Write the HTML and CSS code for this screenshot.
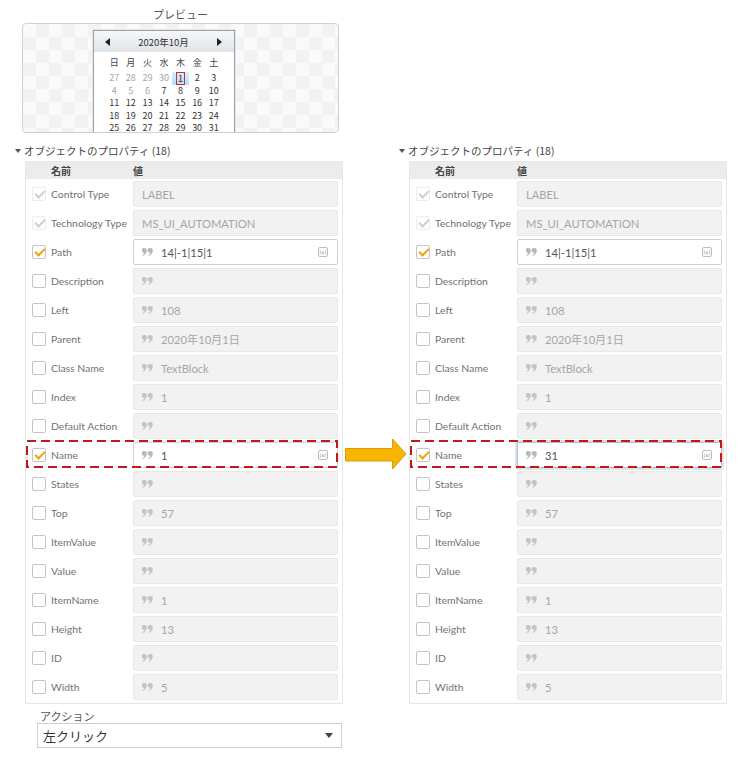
FILE: index.html
```html
<!DOCTYPE html>
<html lang="ja">
<head>
<meta charset="utf-8">
<title>プレビュー</title>
<link rel="stylesheet" href="styles.css">
</head>
<body>
<svg width="0" height="0" class="defs">
  <symbol id="q" viewBox="0 0 11 8">
    <path d="M2.4 0a2.4 2.4 0 0 1 2.4 2.5c0 2.4-1.7 4.3-3.9 5.5l-.5-.8c1.2-.8 1.9-1.6 2.1-2.5A2.4 2.4 0 1 1 2.4 0zM8.4 0a2.4 2.4 0 0 1 2.4 2.5c0 2.4-1.7 4.3-3.9 5.5l-.5-.8c1.2-.8 1.9-1.6 2.1-2.5A2.4 2.4 0 1 1 8.4 0z"/>
  </symbol>
</svg>
<div class="page">
  <section class="preview">
    <div class="preview-title">プレビュー</div>
    <div class="preview-box">
      <div class="cal">
        <div class="cal-head">
          <span class="tri-l"></span>
          <span class="cal-title">2020年10月</span>
          <span class="tri-r"></span>
        </div>
        <div class="cal-body">
          <div class="cal-grid wd">
            <span>日</span><span>月</span><span>火</span><span>水</span><span>木</span><span>金</span><span>土</span>
          </div>
          <div class="cal-grid">
            <span class="o">27</span><span class="o">28</span><span class="o">29</span><span class="o">30</span><span class="sel"><span class="selin">1</span></span><span>2</span><span>3</span>
            <span class="o">4</span><span class="o">5</span><span class="o">6</span><span>7</span><span>8</span><span>9</span><span>10</span>
            <span>11</span><span>12</span><span>13</span><span>14</span><span>15</span><span>16</span><span>17</span>
            <span>18</span><span>19</span><span>20</span><span>21</span><span>22</span><span>23</span><span>24</span>
            <span>25</span><span>26</span><span>27</span><span>28</span><span>29</span><span>30</span><span>31</span>
          </div>
        </div>
      </div>
    </div>
  </section>

  <div class="panels">
    <section class="panel">
      <div class="panel-head"><span class="caret"></span><span>オブジェクトのプロパティ (18)</span></div>
      <div class="props">
        <div class="props-head"><span></span><span>名前</span><span>値</span></div>
        <div class="rows">
          <div class="row"><span class="cb dis on"></span><span class="lbl">Control Type</span><span class="val"><span class="vt">LABEL</span></span></div>
          <div class="row"><span class="cb dis on"></span><span class="lbl">Technology Type</span><span class="val"><span class="vt">MS_UI_AUTOMATION</span></span></div>
          <div class="row"><span class="cb on"></span><span class="lbl">Path</span><span class="val act"><svg class="qi"><use href="#q"/></svg><span class="vt">14|-1|15|1</span><span class="xi">(x)</span></span></div>
          <div class="row"><span class="cb"></span><span class="lbl">Description</span><span class="val"><svg class="qi"><use href="#q"/></svg></span></div>
          <div class="row"><span class="cb"></span><span class="lbl">Left</span><span class="val"><svg class="qi"><use href="#q"/></svg><span class="vt">108</span></span></div>
          <div class="row"><span class="cb"></span><span class="lbl">Parent</span><span class="val"><svg class="qi"><use href="#q"/></svg><span class="vt">2020年10月1日</span></span></div>
          <div class="row"><span class="cb"></span><span class="lbl">Class Name</span><span class="val"><svg class="qi"><use href="#q"/></svg><span class="vt">TextBlock</span></span></div>
          <div class="row"><span class="cb"></span><span class="lbl">Index</span><span class="val"><svg class="qi"><use href="#q"/></svg><span class="vt">1</span></span></div>
          <div class="row"><span class="cb"></span><span class="lbl">Default Action</span><span class="val"><svg class="qi"><use href="#q"/></svg></span></div>
          <div class="row hl"><span class="cb on"></span><span class="lbl">Name</span><span class="val act"><svg class="qi"><use href="#q"/></svg><span class="vt">1</span><span class="xi">(x)</span></span>
            <svg class="dash"><rect x="0" y="0" width="100%" height="100%"/></svg>
            <svg class="arrow" width="62" height="32" viewBox="0 0 62 32"><polygon points="0.5,10.5 47.5,10.5 47.5,1 61,16 47.5,31 47.5,23 0.5,23"/></svg>
          </div>
          <div class="row"><span class="cb"></span><span class="lbl">States</span><span class="val"><svg class="qi"><use href="#q"/></svg></span></div>
          <div class="row"><span class="cb"></span><span class="lbl">Top</span><span class="val"><svg class="qi"><use href="#q"/></svg><span class="vt">57</span></span></div>
          <div class="row"><span class="cb"></span><span class="lbl">ItemValue</span><span class="val"><svg class="qi"><use href="#q"/></svg></span></div>
          <div class="row"><span class="cb"></span><span class="lbl">Value</span><span class="val"><svg class="qi"><use href="#q"/></svg></span></div>
          <div class="row"><span class="cb"></span><span class="lbl">ItemName</span><span class="val"><svg class="qi"><use href="#q"/></svg><span class="vt">1</span></span></div>
          <div class="row"><span class="cb"></span><span class="lbl">Height</span><span class="val"><svg class="qi"><use href="#q"/></svg><span class="vt">13</span></span></div>
          <div class="row"><span class="cb"></span><span class="lbl">ID</span><span class="val"><svg class="qi"><use href="#q"/></svg></span></div>
          <div class="row"><span class="cb"></span><span class="lbl">Width</span><span class="val"><svg class="qi"><use href="#q"/></svg><span class="vt">5</span></span></div>
        </div>
      </div>
      <div class="action">
        <div class="action-label">アクション</div>
        <div class="select"><span>左クリック</span><span class="sel-caret"></span></div>
      </div>
    </section>

    <section class="panel">
      <div class="panel-head"><span class="caret"></span><span>オブジェクトのプロパティ (18)</span></div>
      <div class="props">
        <div class="props-head"><span></span><span>名前</span><span>値</span></div>
        <div class="rows">
          <div class="row"><span class="cb dis on"></span><span class="lbl">Control Type</span><span class="val"><span class="vt">LABEL</span></span></div>
          <div class="row"><span class="cb dis on"></span><span class="lbl">Technology Type</span><span class="val"><span class="vt">MS_UI_AUTOMATION</span></span></div>
          <div class="row"><span class="cb on"></span><span class="lbl">Path</span><span class="val act"><svg class="qi"><use href="#q"/></svg><span class="vt">14|-1|15|1</span><span class="xi">(x)</span></span></div>
          <div class="row"><span class="cb"></span><span class="lbl">Description</span><span class="val"><svg class="qi"><use href="#q"/></svg></span></div>
          <div class="row"><span class="cb"></span><span class="lbl">Left</span><span class="val"><svg class="qi"><use href="#q"/></svg><span class="vt">108</span></span></div>
          <div class="row"><span class="cb"></span><span class="lbl">Parent</span><span class="val"><svg class="qi"><use href="#q"/></svg><span class="vt">2020年10月1日</span></span></div>
          <div class="row"><span class="cb"></span><span class="lbl">Class Name</span><span class="val"><svg class="qi"><use href="#q"/></svg><span class="vt">TextBlock</span></span></div>
          <div class="row"><span class="cb"></span><span class="lbl">Index</span><span class="val"><svg class="qi"><use href="#q"/></svg><span class="vt">1</span></span></div>
          <div class="row"><span class="cb"></span><span class="lbl">Default Action</span><span class="val"><svg class="qi"><use href="#q"/></svg></span></div>
          <div class="row hl"><span class="cb on"></span><span class="lbl">Name</span><span class="val act focus"><svg class="qi"><use href="#q"/></svg><span class="vt">31</span><span class="xi">(x)</span></span>
            <svg class="dash"><rect x="0" y="0" width="100%" height="100%"/></svg>
          </div>
          <div class="row"><span class="cb"></span><span class="lbl">States</span><span class="val"><svg class="qi"><use href="#q"/></svg></span></div>
          <div class="row"><span class="cb"></span><span class="lbl">Top</span><span class="val"><svg class="qi"><use href="#q"/></svg><span class="vt">57</span></span></div>
          <div class="row"><span class="cb"></span><span class="lbl">ItemValue</span><span class="val"><svg class="qi"><use href="#q"/></svg></span></div>
          <div class="row"><span class="cb"></span><span class="lbl">Value</span><span class="val"><svg class="qi"><use href="#q"/></svg></span></div>
          <div class="row"><span class="cb"></span><span class="lbl">ItemName</span><span class="val"><svg class="qi"><use href="#q"/></svg><span class="vt">1</span></span></div>
          <div class="row"><span class="cb"></span><span class="lbl">Height</span><span class="val"><svg class="qi"><use href="#q"/></svg><span class="vt">13</span></span></div>
          <div class="row"><span class="cb"></span><span class="lbl">ID</span><span class="val"><svg class="qi"><use href="#q"/></svg></span></div>
          <div class="row"><span class="cb"></span><span class="lbl">Width</span><span class="val"><svg class="qi"><use href="#q"/></svg><span class="vt">5</span></span></div>
        </div>
      </div>
    </section>
  </div>
</div>
</body>
</html>
```

FILE: styles.css
```css
* { box-sizing: border-box; }

body {
  margin: 0;
  background: #fff;
  color: #555;
  font-family: "Lato", "Noto Sans CJK JP", sans-serif;
}

.defs { position: absolute; width: 0; height: 0; overflow: hidden; }

/* ---------- preview ---------- */
.preview {
  margin-left: 22px;
  width: 317px;
}

.preview-title {
  height: 23px;
  padding-top: 7px;
  line-height: 14px;
  font-size: 11px;
  text-align: center;
  color: #555;
  font-family: "Noto Sans CJK JP", sans-serif;
}

.preview-box {
  height: 110px;
  border: 1px solid #d2d2d2;
  border-radius: 4px;
  overflow: hidden;
  padding: 6px 0 0 70px;
  background: repeating-conic-gradient(#f2f2f2 0 25%, #fafafa 0 50%) 0 0 / 26px 26px;
}

.cal {
  width: 142px;
  height: 130px;
  background: #fff;
  border: 1px solid #98a3ae;
  box-shadow: 0 0 0 1px #e4e7ea;
  font-family: "Noto Sans CJK JP", sans-serif;
}

.cal-head {
  height: 21px;
  display: flex;
  align-items: center;
  justify-content: space-between;
  padding: 0 12px 0 11px;
  background: linear-gradient(#f6f7f9, #dfe3e8);
  font-size: 9.5px;
  color: #333;
}

.tri-l, .tri-r {
  width: 0;
  height: 0;
  border-top: 4px solid transparent;
  border-bottom: 4px solid transparent;
}
.tri-l { border-right: 5px solid #222; }
.tri-r { border-left: 5px solid #222; }

.cal-body { padding: 5px 12px 0 12px; }

.cal-grid {
  display: grid;
  grid-template-columns: repeat(7, 1fr);
  font-size: 9px;
  line-height: 12.5px;
  text-align: center;
  color: #333;
}

.cal-grid.wd { margin-bottom: 2.5px; color: #444; }

.cal-grid .o { color: #a5a5a5; }

.cal-grid .sel {
  background: linear-gradient(#d9eefa, #b9dff3);
  display: flex;
  justify-content: center;
  align-items: center;
}

.selin {
  outline: 1px solid #c0313a;
  line-height: 11px;
  padding: 0 1px;
}

/* ---------- panels ---------- */
.panels {
  display: flex;
  gap: 55px;
  margin-top: 12px;
  margin-left: 14px;
}

.panel { width: 329px; }

.panel-head {
  height: 12px;
  line-height: 12px;
  display: flex;
  align-items: center;
  gap: 2px;
  margin-bottom: 4px;
  font-size: 10.5px;
  color: #444;
  font-family: "Noto Sans CJK JP", sans-serif;
}

.caret {
  width: 0;
  height: 0;
  margin: 0 1px;
  border-left: 3px solid transparent;
  border-right: 3px solid transparent;
  border-top: 4px solid #555;
}

.props {
  margin-left: 11px;
  width: 318px;
  border: 1px solid #e6e6e6;
  border-radius: 2px;
}

.props-head {
  height: 17px;
  background: #ececec;
  display: grid;
  grid-template-columns: 14px 77px 1fr;
  column-gap: 5px;
  align-items: center;
  padding-left: 6px;
  font-size: 10px;
  font-weight: 700;
  color: #444;
  font-family: "Noto Sans CJK JP", sans-serif;
}

.rows {
  display: flex;
  flex-direction: column;
  gap: 3px;
  padding: 2px 4px 3px 6px;
}

.row {
  position: relative;
  display: grid;
  grid-template-columns: 14px 77px 1fr;
  column-gap: 5px;
  align-items: center;
  height: 26px;
}

.cb {
  position: relative;
  width: 14px;
  height: 14px;
  border: 1px solid #c4c4c4;
  border-radius: 2px;
  background: #fff;
}

.cb.on::after {
  content: "";
  position: absolute;
  left: 4px;
  top: 0px;
  width: 4px;
  height: 8px;
  border: solid #f0a500;
  border-width: 0 2px 2px 0;
  transform: rotate(45deg);
}

.cb.dis { border-color: #ececec; }
.cb.dis.on::after { border-color: #cfcfcf; }

.lbl {
  font-size: 10.4px;
  color: #727272;
  white-space: nowrap;
}

.val {
  height: 26px;
  display: flex;
  align-items: center;
  gap: 8px;
  padding: 0 9px 0 8px;
  border: 1px solid #e8e8e8;
  border-radius: 2px;
  background: #f2f2f2;
  font-size: 11.2px;
  color: #a6a6a6;
  white-space: nowrap;
}

.val.act {
  background: #fff;
  border-color: #d0d0d0;
  color: #555;
}

.val.focus {
  border-color: #aebccb;
  box-shadow: 0 0 0 2px #dce3ea;
}

.qi {
  width: 11px;
  height: 8px;
  flex: none;
  fill: #c4c4c4;
}

.val.act .qi { fill: #b8b8b8; }

.xi {
  margin-left: auto;
  width: 10px;
  height: 10px;
  border: 1px solid #bbb;
  border-radius: 2px;
  font-size: 5px;
  line-height: 8px;
  text-align: center;
  color: #888;
  font-family: "DejaVu Sans", sans-serif;
}

.dash {
  position: absolute;
  left: -5px;
  top: -1px;
  width: calc(100% + 4px);
  height: 26px;
  overflow: visible;
  pointer-events: none;
}

.dash rect {
  fill: none;
  stroke: #c8151b;
  stroke-width: 2;
  stroke-dasharray: 9 5;
}

.arrow {
  position: absolute;
  left: calc(100% + 7px);
  top: -4px;
}

.arrow polygon {
  fill: #f7b500;
  stroke: #dd9a00;
  stroke-width: 1;
}

/* ---------- action ---------- */
.action {
  margin-left: 23px;
  margin-top: 6px;
}

.action-label {
  padding-left: 3px;
  font-size: 11px;
  line-height: 12px;
  color: #555;
  font-family: "Noto Sans CJK JP", sans-serif;
}

.select {
  margin-top: 1px;
  width: 305px;
  height: 25px;
  display: flex;
  align-items: center;
  justify-content: space-between;
  padding: 0 8px 0 5px;
  border: 1px solid #cfcfcf;
  font-size: 13px;
  color: #333;
  font-family: "Noto Sans CJK JP", sans-serif;
}

.sel-caret {
  width: 0;
  height: 0;
  border-left: 4px solid transparent;
  border-right: 4px solid transparent;
  border-top: 5px solid #444;
}
```
